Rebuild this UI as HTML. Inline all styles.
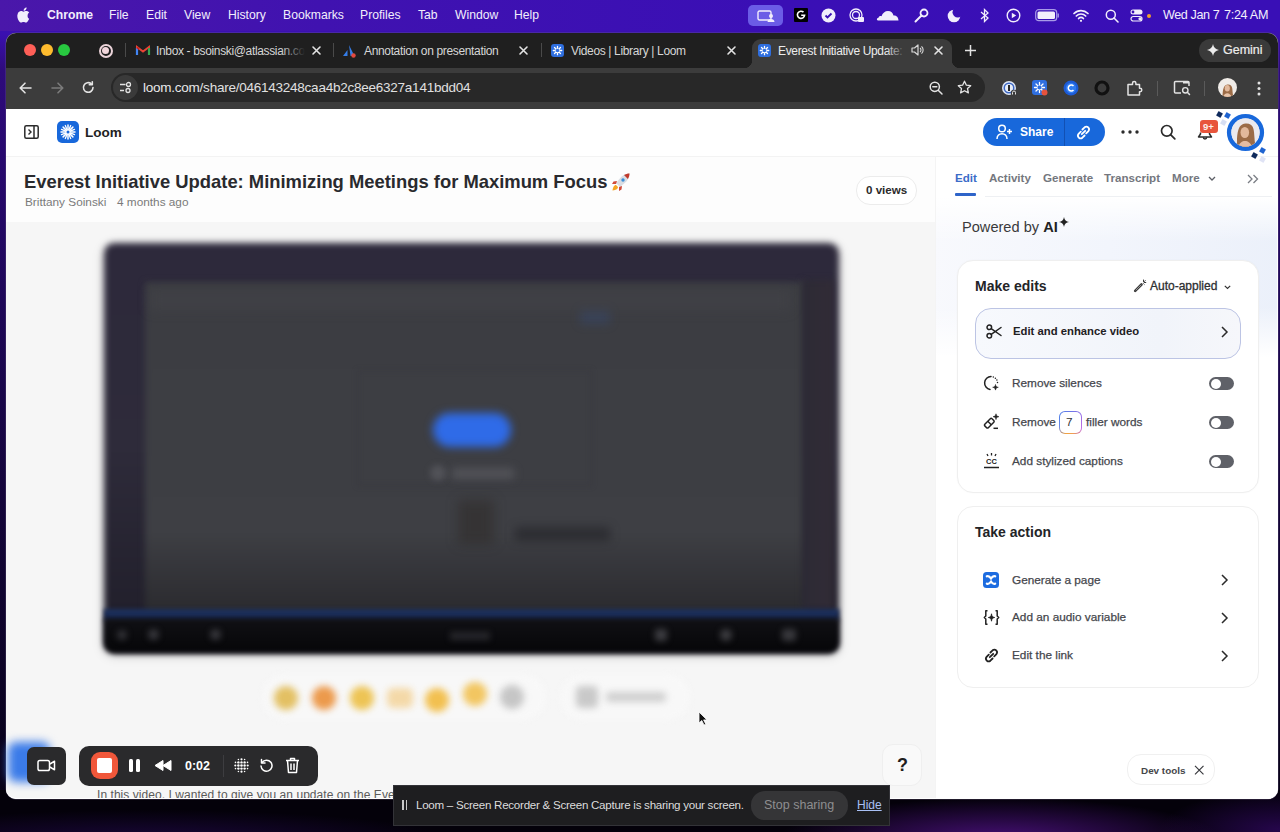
<!DOCTYPE html>
<html><head><meta charset="utf-8">
<style>
*{margin:0;padding:0;box-sizing:border-box}
html,body{width:1280px;height:832px;overflow:hidden}
body{position:relative;font-family:"Liberation Sans",sans-serif;background:#07010f}
.a{position:absolute}
.t{position:absolute;white-space:nowrap;line-height:1}
svg{position:absolute;overflow:visible}
#desk{left:0;top:0;width:1280px;height:832px;background:linear-gradient(180deg,#3b10b3 0px,#3a10b0 34px,#2e0b7c 70px,#280970 150px,#1e0758 300px,#14053a 500px,#08021a 780px,#06010c 832px)}
#deskbot{left:0;top:790px;width:1280px;height:42px;background:radial-gradient(ellipse 220px 40px at 1000px 48px,rgba(90,20,150,.75),transparent),radial-gradient(ellipse 300px 30px at 150px 50px,rgba(40,10,90,.6),transparent),radial-gradient(ellipse 120px 40px at 1280px 40px,rgba(60,10,120,.6),transparent),#04010a}
#menubar{left:0;top:0;width:1280px;height:31px;background:linear-gradient(90deg,#4a17aa,#4012b0 25%,#3a0fb5 60%,#390fb6)}
.mb{color:#f2eefc;font-size:12.2px;top:9px}
#win{left:6px;top:33px;width:1272px;height:766px;border-radius:10px;overflow:hidden;background:#fff;box-shadow:0 0 0 .5px rgba(120,110,140,.5)}
#tabstrip{left:0;top:0;width:1272px;height:36px;background:#1f1f1f}
#toolbar{left:0;top:35px;width:1272px;height:41px;background:#3c3c3c}
#page{left:0;top:76px;width:1272px;height:690px;background:#fff;overflow:hidden}
.tab{color:#d6d6d6;font-size:12px;top:12px;letter-spacing:-0.35px}
.sep{width:1px;height:14px;background:#4a4a4a;top:10px}
.ic{stroke:#e3e3e3;fill:none;stroke-width:1.6;stroke-linecap:round;stroke-linejoin:round}
</style></head><body>
<div id="desk" class="a"></div>
<div id="deskbot" class="a"></div>
<div id="menubar" class="a">
  <svg style="left:17px;top:7px" width="13" height="16" viewBox="0 0 13 16"><path fill="#f2eefc" d="M10.6 8.5c0-1.9 1.6-2.8 1.6-2.9-.9-1.3-2.3-1.5-2.8-1.5-1.2-.1-2.3.7-2.9.7-.6 0-1.5-.7-2.5-.7C2.700 4.200 1.500 5 .9 6.200c-1.300 2.300-.3 5.700.9 7.500.6.900 1.400 1.900 2.300 1.900.9 0 1.300-.6 2.400-.6 1.100 0 1.400.6 2.400.6 1 0 1.600-.9 2.200-1.800.7-1 1-2 1-2.100-.1 0-1.900-.7-1.500-3.200zM8.800 2.800c.5-.6.900-1.500.8-2.300-.8 0-1.700.5-2.200 1.100-.5.600-.9 1.400-.8 2.200.8.100 1.700-.4 2.200-1z"/></svg>
  <div class="t mb" style="left:47px;font-weight:bold">Chrome</div>
  <div class="t mb" style="left:109px">File</div>
  <div class="t mb" style="left:146px">Edit</div>
  <div class="t mb" style="left:184px">View</div>
  <div class="t mb" style="left:228px">History</div>
  <div class="t mb" style="left:283px">Bookmarks</div>
  <div class="t mb" style="left:360px">Profiles</div>
  <div class="t mb" style="left:418px">Tab</div>
  <div class="t mb" style="left:455px">Window</div>
  <div class="t mb" style="left:514px">Help</div>
  <!-- status icons -->
  <div class="a" style="left:748px;top:5px;width:35px;height:21px;border-radius:5px;background:#6b5ce6"></div>
  <svg style="left:757px;top:10px" width="18" height="12" viewBox="0 0 18 12"><rect x="1" y="1" width="13" height="9" rx="1.5" fill="none" stroke="#f2eefc" stroke-width="1.4"/><circle cx="14" cy="6" r="2" fill="#f2eefc"/><path d="M10.5 12c0-2 1.600-3 3.500-3s3.500 1 3.500 3z" fill="#f2eefc"/></svg>
  <div class="a" style="left:794px;top:8px;width:14px;height:14px;background:#000;border-radius:1px"></div>
  <svg style="left:796px;top:10px" width="10" height="10" viewBox="0 0 10 10"><path d="M7.500 2.200A3.600 3.600 0 1 0 8.600 5.200H5.200" fill="none" stroke="#fff" stroke-width="1.6"/></svg>
  <svg style="left:821px;top:8px" width="15" height="15" viewBox="0 0 15 15"><circle cx="7.500" cy="7.500" r="7" fill="#f2eefc"/><path d="M4.500 7.500l2 2 4-4" fill="none" stroke="#3a10b3" stroke-width="1.800"/></svg>
  <svg style="left:849px;top:8px" width="16" height="16" viewBox="0 0 16 16"><circle cx="7" cy="7" r="6" fill="none" stroke="#f2eefc" stroke-width="1.300"/><circle cx="7" cy="7" r="3.500" fill="none" stroke="#f2eefc" stroke-width="1.300"/><rect x="9" y="9" width="6" height="5" rx="1" fill="#f2eefc"/></svg>
  <svg style="left:876px;top:10px" width="23" height="11" viewBox="0 0 23 11"><path d="M2 10.500C.500 10.500 .500 8 2.500 7.800c.300-1.800 2-2.200 3-1.600C6.500 3 9 1 12 1c3 0 5 2 5.500 4.500 2.500-.3 5 1.500 5 5z" fill="#f2eefc"/></svg>
  <svg style="left:914px;top:8px" width="15" height="15" viewBox="0 0 15 15"><circle cx="10" cy="5" r="3.500" fill="none" stroke="#f2eefc" stroke-width="1.800"/><path d="M7.500 7.500L1.500 13.500" stroke="#f2eefc" stroke-width="2" stroke-linecap="round"/></svg>
  <svg style="left:947px;top:8px" width="15" height="15" viewBox="0 0 15 15"><defs><mask id="mm"><rect width="15" height="15" fill="#fff"/><circle cx="10.800" cy="4.300" r="5.300" fill="#000"/></mask></defs><circle cx="7" cy="8" r="6.300" fill="#f2eefc" mask="url(#mm)"/></svg>
  <svg style="left:979px;top:8px" width="11" height="15" viewBox="0 0 11 15"><path d="M2 4l7 6-3.500 3.500V1.500L9 5 2 11" fill="none" stroke="#f2eefc" stroke-width="1.300"/></svg>
  <svg style="left:1006px;top:8px" width="15" height="15" viewBox="0 0 15 15"><circle cx="7.500" cy="7.500" r="6.300" fill="none" stroke="#f2eefc" stroke-width="1.400"/><path d="M5.800 4.800v5.400l4.400-2.700z" fill="#f2eefc"/></svg>
  <svg style="left:1035px;top:9px" width="25" height="13" viewBox="0 0 25 13"><rect x=".700" y=".700" width="21" height="11" rx="3" fill="none" stroke="#a89ae8" stroke-width="1.200"/><rect x="2.500" y="2.500" width="17.500" height="7.500" rx="1.500" fill="#f2eefc"/><path d="M23.200 4.500v4" stroke="#a89ae8" stroke-width="1.400"/></svg>
  <svg style="left:1073px;top:9px" width="16" height="13" viewBox="0 0 16 13"><path d="M1 4.500a10 10 0 0 1 14 0M3.300 7a6.500 6.500 0 0 1 9.400 0M5.600 9.500a3.200 3.200 0 0 1 4.800 0" fill="none" stroke="#f2eefc" stroke-width="1.700" stroke-linecap="round"/><circle cx="8" cy="11.800" r="1.100" fill="#f2eefc"/></svg>
  <svg style="left:1105px;top:9px" width="14" height="14" viewBox="0 0 14 14"><circle cx="5.800" cy="5.800" r="4.500" fill="none" stroke="#f2eefc" stroke-width="1.500"/><path d="M9 9l4 4" stroke="#f2eefc" stroke-width="1.600" stroke-linecap="round"/></svg>
  <svg style="left:1130px;top:9px" width="13" height="13" viewBox="0 0 13 13"><rect x=".500" y=".500" width="12" height="5" rx="2.500" fill="#f2eefc"/><rect x="1" y="7.500" width="11" height="4.500" rx="2.250" fill="none" stroke="#f2eefc" stroke-width="1.200"/><circle cx="3" cy="3" r="1.400" fill="#3a10b3"/><circle cx="10" cy="9.750" r="1.600" fill="#f2eefc"/></svg>
  <div class="a" style="left:1147px;top:14px;width:4px;height:4px;border-radius:50%;background:#f0a030"></div>
  <div class="t mb" style="left:1163px;font-size:12.6px;letter-spacing:-0.4px">Wed Jan 7</div>
  <div class="t mb" style="left:1224px;font-size:12.6px;letter-spacing:-0.3px">7:24 AM</div>
</div>

<div id="win" class="a">
  <div id="tabstrip" class="a">
    <div class="a" style="left:18px;top:11px;width:12px;height:12px;border-radius:50%;background:#fe5f57"></div>
    <div class="a" style="left:35px;top:11px;width:12px;height:12px;border-radius:50%;background:#febb2e"></div>
    <div class="a" style="left:52px;top:11px;width:12px;height:12px;border-radius:50%;background:#28c840"></div>
    <div class="a" style="left:92.500px;top:10.500px;width:14px;height:14px;border-radius:50%;border:2px solid #ecd4da"></div>
    <div class="a" style="left:96px;top:14px;width:7px;height:7px;border-radius:50%;background:#f2d6dc"></div>
    <div class="a sep" style="left:119px"></div>
    <!-- gmail -->
    <svg style="left:130px;top:12px" width="14" height="11" viewBox="0 0 14 11"><path d="M1 10V2l6 4.500L13 2v8" fill="none" stroke="#ea4335" stroke-width="2"/><path d="M1 10V3" stroke="#4285f4" stroke-width="2.200"/><path d="M13 10V3" stroke="#34a853" stroke-width="2.200"/><path d="M1 2.500l2 1.500" stroke="#c5221f" stroke-width="2"/></svg>
    <div class="t tab" style="left:150px">Inbox - bsoinski@atlassian.co</div>
    <div class="a" style="left:275px;top:6px;width:30px;height:22px;background:linear-gradient(90deg,rgba(31,31,31,0),#1f1f1f 80%)"></div>
    <svg style="left:306px;top:13px" width="9" height="9" viewBox="0 0 9 9"><path d="M1 1l7 7M8 1L1 8" class="ic" stroke-width="1.400"/></svg>
    <div class="a sep" style="left:327px"></div>
    <svg style="left:336px;top:11px" width="14" height="14" viewBox="0 0 14 14"><path d="M7 1L12.500 12h-4zM5.500 6L1 12h4.500z" fill="#357de8"/><circle cx="11.500" cy="11.500" r="2.200" fill="#e2483d"/></svg>
    <div class="t tab" style="left:358px">Annotation on presentation</div>
    <svg style="left:513px;top:13px" width="9" height="9" viewBox="0 0 9 9"><path d="M1 1l7 7M8 1L1 8" class="ic" stroke-width="1.400"/></svg>
    <div class="a sep" style="left:535px"></div>
    <div class="a" style="left:545px;top:11px;width:13px;height:13px;border-radius:3px;background:#2f6fe0"></div>
    <svg style="left:545px;top:11px" width="13" height="13" viewBox="0 0 13 13"><g stroke="#fff" stroke-width="1.300" stroke-linecap="round"><path d="M6.500 2.300v8.400M2.300 6.500h8.400M3.500 3.500l6 6M9.500 3.500l-6 6"/></g><circle cx="6.500" cy="6.500" r="1.800" fill="#2f6fe0"/></svg>
    <div class="t tab" style="left:565px">Videos | Library | Loom</div>
    <svg style="left:721px;top:13px" width="9" height="9" viewBox="0 0 9 9"><path d="M1 1l7 7M8 1L1 8" class="ic" stroke-width="1.400"/></svg>
    <!-- active tab -->
    <div class="a" style="left:746px;top:6px;width:200px;height:31px;background:#3c3c3c;border-radius:9px 9px 0 0"></div>
    <div class="a" style="left:738px;top:27px;width:8px;height:9px;background:radial-gradient(circle at 0 0,transparent 8px,#3c3c3c 8.500px)"></div>
    <div class="a" style="left:946px;top:27px;width:8px;height:9px;background:radial-gradient(circle at 100% 0,transparent 8px,#3c3c3c 8.500px)"></div>
    <div class="a" style="left:752px;top:11px;width:13px;height:13px;border-radius:3px;background:#2f6fe0"></div>
    <svg style="left:752px;top:11px" width="13" height="13" viewBox="0 0 13 13"><g stroke="#fff" stroke-width="1.300" stroke-linecap="round"><path d="M6.500 2.300v8.400M2.300 6.500h8.400M3.500 3.500l6 6M9.500 3.500l-6 6"/></g><circle cx="6.500" cy="6.500" r="1.800" fill="#2f6fe0"/></svg>
    <div class="t tab" style="left:772px;color:#ececec">Everest Initiative Update:</div>
    <div class="a" style="left:880px;top:8px;width:22px;height:22px;background:linear-gradient(90deg,rgba(60,60,60,0),#3c3c3c 90%)"></div>
    <svg style="left:905px;top:11px" width="13" height="12" viewBox="0 0 13 12"><path d="M1 4h2.500L7 1v10L3.500 8H1z" fill="none" stroke="#d8d8d8" stroke-width="1.200" stroke-linejoin="round"/><path d="M9 4a2.500 2.500 0 0 1 0 4M10.500 2.300a5 5 0 0 1 0 7.400" fill="none" stroke="#d8d8d8" stroke-width="1.100"/></svg>
    <svg style="left:928px;top:13px" width="9" height="9" viewBox="0 0 9 9"><path d="M1 1l7 7M8 1L1 8" class="ic" stroke-width="1.400"/></svg>
    <svg style="left:959px;top:12px" width="11" height="11" viewBox="0 0 11 11"><path d="M5.500 0v11M0 5.500h11" stroke="#e3e3e3" stroke-width="1.500"/></svg>
    <!-- gemini -->
    <div class="a" style="left:1193px;top:6px;width:72px;height:23px;border-radius:12px;background:#3a3a3a"></div>
    <svg style="left:1201px;top:11px" width="12" height="12" viewBox="0 0 12 12"><path d="M6 0C6.500 3.300 8.700 5.500 12 6 8.700 6.500 6.500 8.700 6 12 5.500 8.700 3.300 6.500 0 6 3.300 5.500 5.500 3.300 6 0z" fill="#ececec"/></svg>
    <div class="t" style="left:1217px;top:11px;font-size:12.5px;color:#ececec;-webkit-text-stroke:.2px #ececec">Gemini</div>
  </div>
  <div id="toolbar" class="a">
    <svg style="left:13px;top:14px" width="13" height="12" viewBox="0 0 13 12"><path d="M12 6H1.500M6 1.200L1.200 6 6 10.800" class="ic" stroke-width="1.600"/></svg>
    <svg style="left:45px;top:14px" width="13" height="12" viewBox="0 0 13 12"><path d="M1 6h10.500M7 1.200L11.800 6 7 10.800" class="ic" style="stroke:#7b7b7b"/></svg>
    <svg style="left:76px;top:13px" width="13" height="13" viewBox="0 0 13 13"><path d="M11 6.500A4.800 4.800 0 1 1 9.300 2.800" class="ic" stroke-width="1.600"/><path d="M10.300 .800v3h-3" class="ic" stroke-width="1.600"/></svg>
    <div class="a" style="left:105px;top:5px;width:874px;height:29px;border-radius:15px;background:#282828"></div>
    <div class="a" style="left:107px;top:7px;width:25px;height:25px;border-radius:50%;background:#3a3a3a"></div>
    <svg style="left:113px;top:13px" width="13" height="13" viewBox="0 0 13 13"><path d="M1 3.500h5.500M1 9.500h4" stroke="#e3e3e3" stroke-width="1.400"/><circle cx="9.500" cy="3.500" r="2" fill="none" stroke="#e3e3e3" stroke-width="1.300"/><circle cx="9" cy="9.500" r="2" fill="none" stroke="#e3e3e3" stroke-width="1.300"/></svg>
    <div class="t" style="left:137px;top:13px;font-size:13.5px;letter-spacing:-0.24px;color:#e8e8e8">loom.com<span style="color:#e0e0e0">/share/046143248caa4b2c8ee6327a141bdd04</span></div>
    <svg style="left:923px;top:13px" width="14" height="14" viewBox="0 0 14 14"><circle cx="5.800" cy="5.800" r="4.600" fill="none" stroke="#e3e3e3" stroke-width="1.500"/><path d="M9.200 9.200l3.800 3.800M3.800 5.800h4" stroke="#e3e3e3" stroke-width="1.500" stroke-linecap="round"/></svg>
    <svg style="left:951px;top:12px" width="15" height="15" viewBox="0 0 15 15"><path d="M7.500 1.200l1.900 4 4.300.5-3.200 2.900.9 4.300-3.900-2.200-3.900 2.200.9-4.300L1.300 5.700l4.300-.5z" fill="none" stroke="#e3e3e3" stroke-width="1.300" stroke-linejoin="round"/></svg>
    <!-- extensions -->
    <svg style="left:995px;top:12px" width="17" height="17" viewBox="0 0 17 17"><circle cx="8" cy="8" r="7" fill="#dfe6f2"/><circle cx="8" cy="8" r="5.500" fill="#3b66c4"/><circle cx="8" cy="8" r="4" fill="#e8eef8"/><rect x="7" y="5" width="2" height="6" fill="#2a2a2a"/><circle cx="13" cy="13" r="3.200" fill="#3c3c3c"/><path d="M11.500 14.500v-2a1.500 1.500 0 0 1 3 0v2" fill="none" stroke="#e3e3e3" stroke-width="1"/></svg>
    <div class="a" style="left:1026px;top:12px;width:15px;height:15px;border-radius:3px;background:#2f6fe0"></div>
    <svg style="left:1026px;top:12px" width="15" height="15" viewBox="0 0 15 15"><g stroke="#fff" stroke-width="1.300" stroke-linecap="round"><path d="M7.500 2.500v10M2.500 7.500h10M4 4l7 7M11 4l-7 7"/></g><circle cx="7.500" cy="7.500" r="2" fill="#2f6fe0"/><circle cx="12.500" cy="12.500" r="3" fill="#e5533d"/></svg>
    <svg style="left:1057px;top:12px" width="16" height="16" viewBox="0 0 16 16"><circle cx="8" cy="8" r="7.500" fill="#1d5bd6"/><circle cx="8" cy="8" r="5.200" fill="#2f7cf0"/><path d="M10.500 6a3 3 0 1 0 0 4" fill="none" stroke="#fff" stroke-width="1.500"/></svg>
    <svg style="left:1088px;top:12px" width="16" height="16" viewBox="0 0 16 16"><circle cx="8" cy="8" r="6" fill="none" stroke="#111" stroke-width="3.200"/></svg>
    <svg style="left:1120px;top:12px" width="17" height="17" viewBox="0 0 17 17"><path d="M2 4.500h4.500V3.300a1.700 1.700 0 0 1 3.400 0v1.200H13.500v3.800h.6a1.700 1.700 0 0 1 0 3.400h-.6v3.300H2z" fill="none" stroke="#e3e3e3" stroke-width="1.500" stroke-linejoin="round"/></svg>
    <div class="a" style="left:1151px;top:13px;width:1px;height:15px;background:#5a5a5a"></div>
    <svg style="left:1167px;top:11px" width="18" height="17" viewBox="0 0 18 17"><path d="M8 14H2.500a1 1 0 0 1-1-1V3.500a1 1 0 0 1 1-1H15a1 1 0 0 1 1 1V7" fill="none" stroke="#e3e3e3" stroke-width="1.500"/><path d="M10 3.500h6" stroke="#e3e3e3" stroke-width="2.200"/><circle cx="12.300" cy="11.300" r="2.700" fill="none" stroke="#e3e3e3" stroke-width="1.400"/><path d="M14.300 13.300l2.200 2.200" stroke="#e3e3e3" stroke-width="1.500" stroke-linecap="round"/></svg>
    <div class="a" style="left:1198px;top:13px;width:1px;height:15px;background:#5a5a5a"></div>
    <svg style="left:1212px;top:10px" width="19" height="19" viewBox="0 0 41 41"><defs><clipPath id="av2"><circle cx="20.500" cy="20.500" r="20.500"/></clipPath></defs><g clip-path="url(#av2)"><rect x="0" y="0" width="41" height="41" fill="#f0ece8"/><path d="M10 41c0-10 0-26 10.500-27S31 22 31.500 30 34 38 34 41z" fill="#9c6c47"/><ellipse cx="20" cy="22" rx="5.500" ry="7" fill="#e2b99c"/><path d="M11 42c1-6 5-9 9-9s8 3 9.500 9z" fill="#e8c4aa"/></g></svg>
    <svg style="left:1251px;top:13px" width="4" height="15" viewBox="0 0 4 15"><circle cx="2" cy="2" r="1.500" fill="#e3e3e3"/><circle cx="2" cy="7.500" r="1.500" fill="#e3e3e3"/><circle cx="2" cy="13" r="1.500" fill="#e3e3e3"/></svg>
  </div>
  <div id="page" class="a"></div>
</div>

<!-- ===== PAGE ===== -->
<div class="a" style="left:6px;top:157px;width:929px;height:65px;background:#fdfdfd"></div>
<div class="a" style="left:6px;top:222px;width:929px;height:576px;background:#f6f6f6;border-bottom-left-radius:10px"></div>
<div class="a" style="left:6px;top:156px;width:1272px;height:1px;background:#f3f3f3"></div>
<div class="a" style="left:935px;top:157px;width:1px;height:641px;background:#f4f4f4"></div>
<!-- header -->
<svg style="left:24px;top:125px" width="15" height="14" viewBox="0 0 15 14"><rect x=".8" y=".8" width="13.4" height="12.4" rx="1.5" fill="none" stroke="#2b2b2b" stroke-width="1.5"/><path d="M10 1v12" stroke="#2b2b2b" stroke-width="1.5"/><path d="M4.5 4.5L7 7 4.5 9.5" fill="none" stroke="#2b2b2b" stroke-width="1.4"/></svg>
<div class="a" style="left:57px;top:121px;width:22px;height:22px;border-radius:5px;background:#1868db"></div>
<svg style="left:57px;top:121px" width="22" height="22" viewBox="0 0 22 22"><g stroke="#fff" stroke-width="1.500" stroke-linecap="round"><path d="M11 4v14M4 11h14M6.100 6.100l9.800 9.800M15.900 6.100l-9.800 9.800"/><path d="M8.300 4.500l5.400 13M4.500 8.300l13 5.400M13.700 4.500l-5.400 13M4.500 13.700l13-5.400" stroke-width="1.300"/></g><circle cx="11" cy="11" r="2.600" fill="#fff"/><circle cx="11" cy="11" r="1.500" fill="#1868db"/></svg>
<div class="t" style="left:85px;top:126px;font-size:13.5px;font-weight:bold;color:#222">Loom</div>
<div class="a" style="left:983px;top:118px;width:122px;height:28px;border-radius:14px;background:#1868db"></div>
<div class="a" style="left:1064px;top:118px;width:1px;height:28px;background:rgba(10,50,130,.45)"></div>
<svg style="left:996px;top:124px" width="17" height="16" viewBox="0 0 17 16"><circle cx="6" cy="4.500" r="3.300" fill="none" stroke="#fff" stroke-width="1.500"/><path d="M1 15c0-3.300 2.200-5.300 5-5.300s5 2 5 5.300" fill="none" stroke="#fff" stroke-width="1.500"/><path d="M13.500 5v5M11 7.500h5" stroke="#fff" stroke-width="1.500"/></svg>
<div class="t" style="left:1020px;top:126px;font-size:12px;font-weight:bold;color:#fff">Share</div>
<svg style="left:1075px;top:124px" width="17" height="17" viewBox="0 0 17 17"><path d="M6.800 10.200l3.400-3.400M5.800 7.700L3.600 9.900a2.700 2.700 0 0 0 3.800 3.800l2.200-2.200M11.200 9.300l2.200-2.200a2.700 2.700 0 0 0-3.800-3.800L7.400 5.500" fill="none" stroke="#fff" stroke-width="1.800" stroke-linecap="round"/></svg>
<svg style="left:1121px;top:130px" width="18" height="4" viewBox="0 0 18 4"><circle cx="2" cy="2" r="1.700" fill="#2b2b2b"/><circle cx="9" cy="2" r="1.700" fill="#2b2b2b"/><circle cx="16" cy="2" r="1.700" fill="#2b2b2b"/></svg>
<svg style="left:1160px;top:124px" width="16" height="16" viewBox="0 0 16 16"><circle cx="6.800" cy="6.800" r="5.300" fill="none" stroke="#2b2b2b" stroke-width="1.700"/><path d="M10.800 10.800l4 4" stroke="#2b2b2b" stroke-width="1.800" stroke-linecap="round"/></svg>
<svg style="left:1197px;top:124px" width="16" height="17" viewBox="0 0 16 17"><path d="M3.500 8.500v1.500L1.500 13h13l-2-3V8.500" fill="none" stroke="#2b2b2b" stroke-width="1.500" stroke-linejoin="round"/><path d="M6.300 13.300a1.700 1.700 0 0 0 3.400 0" fill="none" stroke="#2b2b2b" stroke-width="1.400"/></svg>
<div class="a" style="left:1200px;top:120px;width:18px;height:12.500px;border-radius:3px;background:#e8553c"></div>
<div class="t" style="left:1203px;top:122px;font-size:9.5px;font-weight:bold;color:#fdeee8">9+</div>
<svg style="left:1225px;top:112px" width="41" height="41" viewBox="0 0 41 41"><defs><clipPath id="av"><circle cx="20.500" cy="20.500" r="14.200"/></clipPath></defs><circle cx="20.500" cy="20.500" r="16.300" fill="#fff" stroke="#1868db" stroke-width="4.600"/><g clip-path="url(#av)"><rect x="0" y="0" width="41" height="41" fill="#eceaee"/><path d="M12 32c0-8 0-20 8.500-20.500S29 18 29.500 26 31 33 31 36H12z" fill="#9c6c47"/><ellipse cx="19.800" cy="20.500" rx="4.300" ry="5.600" fill="#e2b99c"/><path d="M13 36c1-5 4-7 7-7s6 2 7.500 7z" fill="#e4bca2"/></g></svg>
<div class="a" style="left:1217px;top:111.500px;width:5px;height:5px;background:#0f2a5c;transform:rotate(30deg);filter:blur(.3px)"></div>
<div class="a" style="left:1224.500px;top:112.500px;width:5px;height:5px;background:#1f63d0;transform:rotate(30deg);filter:blur(.3px)"></div>
<div class="a" style="left:1221px;top:120px;width:5px;height:5px;background:#d6def2;transform:rotate(30deg);filter:blur(.3px)"></div>
<div class="a" style="left:1252px;top:152.500px;width:5px;height:5px;background:#0f2a5c;transform:rotate(30deg);filter:blur(.3px)"></div>
<div class="a" style="left:1260px;top:147.500px;width:5px;height:5px;background:#1f63d0;transform:rotate(30deg);filter:blur(.3px)"></div>
<div class="a" style="left:1259.500px;top:157px;width:5px;height:5px;background:#dfe3f5;transform:rotate(30deg);filter:blur(.3px)"></div>
<!-- title -->
<div class="t" style="left:24px;top:173px;font-size:18.4px;font-weight:bold;color:#292a2e">Everest Initiative Update: Minimizing Meetings for Maximum Focus</div>
<svg style="left:611px;top:172px" width="20" height="20" viewBox="0 0 20 20"><path d="M18.500 1.500c-4 0-8 2-10.500 6L5 11l4 4 3.500-3c4-2.500 6-6.500 6-10.500z" fill="#d9dde3"/><path d="M18.500 1.500c-2 0-4 .700-5.500 1.600l3.900 3.900c.9-1.500 1.600-3.500 1.600-5.500z" fill="#c0392b"/><circle cx="12" cy="8" r="1.700" fill="#3a8fd8"/><path d="M6 9L2.500 9.500 1 12h4zM11 14l-.5 3.500L8 19v-4z" fill="#d04a3a"/><path d="M5 13c-1.500 0-3 1.500-3.500 5.500C5.500 18 7 16.500 7 15z" fill="#f5a623"/></svg>
<div class="t" style="left:25px;top:197px;font-size:11.8px;color:#7a7a7a">Brittany Soinski</div>

<div class="t" style="left:117px;top:197px;font-size:11.8px;color:#7a7a7a">4 months ago</div>
<div class="a" style="left:856px;top:176px;width:61px;height:29px;border-radius:14px;border:1px solid #ececec;background:#fff"></div>
<div class="t" style="left:866px;top:184px;font-size:11.6px;font-weight:bold;color:#2b2b2b">0 views</div>

<!-- ===== RIGHT PANEL ===== -->
<div class="a" style="left:936px;top:197px;width:341px;height:160px;background:linear-gradient(180deg,rgba(255,255,255,1) 0,rgba(255,255,255,0) 45px,rgba(255,255,255,0) 110px,rgba(255,255,255,1) 160px),linear-gradient(95deg,#f8f9fd 0%,#f2f5fc 50%,#ebf0fa 100%)"></div>
<div class="t" style="left:955px;top:172px;font-size:11.6px;font-weight:bold;color:#3b6cc8">Edit</div>
<div class="a" style="left:955px;top:193px;width:21px;height:2.5px;border-radius:1px;background:#2e64c9"></div>
<div class="a" style="left:985px;top:196px;width:287px;height:1px;background:#eef0f3"></div>
<div class="t" style="left:989px;top:172px;font-size:11.6px;font-weight:bold;color:#74777e">Activity</div>
<div class="t" style="left:1043px;top:172px;font-size:11.6px;font-weight:bold;color:#74777e">Generate</div>
<div class="t" style="left:1104px;top:172px;font-size:11.6px;font-weight:bold;color:#74777e">Transcript</div>
<div class="t" style="left:1172px;top:172px;font-size:11.6px;font-weight:bold;color:#74777e">More</div>
<svg style="left:1208px;top:176px" width="8" height="5" viewBox="0 0 8 5"><path d="M1 1l3 3 3-3" fill="none" stroke="#5c5f66" stroke-width="1.300"/></svg>
<svg style="left:1247px;top:174px" width="12" height="10" viewBox="0 0 12 10"><path d="M1 1l4 4-4 4M6.500 1l4 4-4 4" fill="none" stroke="#7a7d84" stroke-width="1.300"/></svg>
<div class="t" style="left:962px;top:220px;font-size:14.6px;color:#3a3a3c">Powered by <b style="color:#222">AI</b></div>
<svg style="left:1059px;top:217px" width="10" height="10" viewBox="0 0 10 10"><path d="M5 0C5.400 2.800 7.200 4.600 10 5 7.200 5.400 5.400 7.200 5 10 4.600 7.200 2.800 5.400 0 5 2.800 4.600 4.600 2.800 5 0z" fill="#222"/></svg>

<!-- Make edits card -->
<div class="a" style="left:957px;top:260px;width:302px;height:233px;border-radius:16px;border:1px solid #efefef;background:#fff;box-shadow:0 0 2px rgba(0,0,0,.03)"></div>
<div class="t" style="left:975px;top:279px;font-size:14px;font-weight:bold;color:#232427">Make edits</div>
<svg style="left:1133px;top:279px" width="14" height="14" viewBox="0 0 14 14"><path d="M2.200 11.800l6.300-6.300" stroke="#3a3a3a" stroke-width="2.600" stroke-linecap="round"/><path d="M3 11l5-5" stroke="#bbb" stroke-width=".7" stroke-linecap="round"/><path d="M10.500 1v1.600M12.800 3.500h-1.600M12.200 1.600l-1 1M10.600 4.700l.6.6" stroke="#3a3a3a" stroke-width="1" stroke-linecap="round"/></svg>
<div class="t" style="left:1150px;top:280px;font-size:12px;color:#2d2e31;-webkit-text-stroke:.3px #2d2e31">Auto-applied</div>
<svg style="left:1224px;top:285px" width="7" height="5" viewBox="0 0 7 5"><path d="M.800 .800l2.700 2.700 2.700-2.700" fill="none" stroke="#333" stroke-width="1.200"/></svg>
<div class="a" style="left:975px;top:308px;width:266px;height:51px;border-radius:16px;border:1px solid #bcc4e4;background:linear-gradient(90deg,#f7f9fd,#f1f4fa 70%,#f6f7fb)"></div>
<svg style="left:986px;top:324px" width="16" height="15" viewBox="0 0 16 15"><circle cx="3.300" cy="3.300" r="2.300" fill="none" stroke="#222" stroke-width="1.500"/><circle cx="3.300" cy="11.700" r="2.300" fill="none" stroke="#222" stroke-width="1.500"/><path d="M5.200 4.700L15 11.500M5.200 10.300L15 3.500" stroke="#222" stroke-width="1.500" stroke-linecap="round"/></svg>
<div class="t" style="left:1013px;top:326px;font-size:11.3px;font-weight:bold;color:#1f2023">Edit and enhance video</div>
<svg style="left:1221px;top:326px" width="7" height="12" viewBox="0 0 7 12"><path d="M1 1l5 5-5 5" fill="none" stroke="#2b2b2b" stroke-width="1.500"/></svg>

<svg style="left:983px;top:375px" width="17" height="17" viewBox="0 0 17 17"><path d="M8 1.500A6.500 6.500 0 0 0 7 14.400" fill="none" stroke="#222" stroke-width="1.500" stroke-linecap="round"/><g fill="#222"><circle cx="10.300" cy="2" r=".75"/><circle cx="12.400" cy="3.200" r=".75"/><circle cx="13.900" cy="5.100" r=".75"/><circle cx="14.500" cy="7.500" r=".75"/></g><path d="M12.500 9.500C12.800 11.300 13.500 12 15.300 12.300 13.500 12.600 12.800 13.300 12.500 15.100 12.200 13.300 11.500 12.600 9.700 12.300 11.500 12 12.200 11.300 12.500 9.500z" fill="#222" stroke="#222" stroke-width=".6" stroke-linejoin="round"/></svg>
<div class="t" style="left:1012px;top:378px;font-size:11.8px;color:#45474d;-webkit-text-stroke:.25px #45474d">Remove silences</div>
<div class="a" style="left:1209px;top:377px;width:25px;height:13px;border-radius:7px;background:#5f6168"></div>
<div class="a" style="left:1210.5px;top:378.5px;width:10px;height:10px;border-radius:50%;background:#fff"></div>

<svg style="left:983px;top:413px" width="17" height="17" viewBox="0 0 17 17"><path d="M1.800 11.200l5.500-5.500a1.200 1.200 0 0 1 1.700 0l1.800 1.800a1.200 1.200 0 0 1 0 1.700l-5.500 5.500a1.200 1.200 0 0 1-1.700 0L1.800 12.900a1.200 1.200 0 0 1 0-1.700z" fill="none" stroke="#222" stroke-width="1.500"/><path d="M4.800 8.300l3.400 3.400" stroke="#222" stroke-width="1.400"/><path d="M10.500 15.300h4.500" stroke="#222" stroke-width="1.500"/><path d="M13 .800C13.300 2.700 14 3.400 15.900 3.700 14 4 13.300 4.700 13 6.600 12.700 4.700 12 4 10.100 3.700 12 3.400 12.700 2.700 13 .800z" fill="#222" stroke="#222" stroke-width=".6" stroke-linejoin="round"/></svg>
<div class="t" style="left:1012px;top:417px;font-size:11.8px;color:#45474d;-webkit-text-stroke:.25px #45474d">Remove</div>
<div class="a" style="left:1059px;top:411px;width:23px;height:23px;border-radius:6px;background:conic-gradient(from 0deg,#6a78e8 0deg,#a26de6 70deg,#c570de 120deg,#f0a050 170deg,#f4a340 200deg,#6a8ae8 250deg,#4f7fe8 300deg,#6a78e8 360deg)"></div>
<div class="a" style="left:1060.300px;top:412.300px;width:20.400px;height:20.400px;border-radius:5px;background:#fff"></div>
<div class="t" style="left:1066px;top:417px;font-size:11.8px;color:#333">7</div>
<div class="t" style="left:1086px;top:417px;font-size:11.8px;color:#45474d;-webkit-text-stroke:.25px #45474d">filler words</div>
<div class="a" style="left:1209px;top:416px;width:25px;height:13px;border-radius:7px;background:#5f6168"></div>
<div class="a" style="left:1210.5px;top:417.5px;width:10px;height:10px;border-radius:50%;background:#fff"></div>

<svg style="left:983px;top:452px" width="17" height="17" viewBox="0 0 17 17"><path d="M4 2l1 2M8.500 1v2.500M13 2l-1 2" stroke="#222" stroke-width="1.300"/><text x="8.500" y="12" text-anchor="middle" font-family="Liberation Sans" font-weight="bold" font-size="7.500" fill="#222">CC</text><path d="M1 15.500h15" stroke="#222" stroke-width="1.500"/></svg>
<div class="t" style="left:1012px;top:456px;font-size:11.8px;color:#45474d;-webkit-text-stroke:.25px #45474d">Add stylized captions</div>
<div class="a" style="left:1209px;top:455px;width:25px;height:13px;border-radius:7px;background:#5f6168"></div>
<div class="a" style="left:1210.5px;top:456.5px;width:10px;height:10px;border-radius:50%;background:#fff"></div>

<!-- Take action card -->
<div class="a" style="left:957px;top:506px;width:302px;height:182px;border-radius:16px;border:1px solid #efefef;background:#fff"></div>
<div class="t" style="left:975px;top:525px;font-size:14px;font-weight:bold;color:#232427">Take action</div>
<div class="a" style="left:983px;top:572px;width:16px;height:16px;border-radius:3.500px;background:#1d6ce0"></div>
<svg style="left:983px;top:572px" width="16" height="16" viewBox="0 0 16 16"><path d="M3.800 4.300c1.600-.6 3 .3 4.200 2.200 1.200-1.900 2.600-2.800 4.200-2.200M3.800 11.700c1.600.6 3-.3 4.200-2.200 1.200 1.900 2.600 2.800 4.200 2.200" fill="none" stroke="#fff" stroke-width="2.200" stroke-linecap="round"/></svg>
<div class="t" style="left:1012px;top:575px;font-size:11.8px;color:#45474d;-webkit-text-stroke:.25px #45474d">Generate a page</div>
<svg style="left:1221px;top:574px" width="7" height="12" viewBox="0 0 7 12"><path d="M1 1l5 5-5 5" fill="none" stroke="#2b2b2b" stroke-width="1.500"/></svg>
<svg style="left:983px;top:609px" width="17" height="17" viewBox="0 0 17 17"><path d="M4.500 1.800H2.800v5.200L1.300 8.500l1.500 1.500v5.200h1.700M12.500 1.800h1.700v5.200l1.500 1.500-1.500 1.500v5.200h-1.700" fill="none" stroke="#222" stroke-width="1.500" stroke-linejoin="round"/><path d="M8.500 4.800C8.800 7.200 9.300 7.900 11.700 8.500 9.300 9.100 8.800 9.800 8.500 12.200 8.200 9.800 7.700 9.100 5.300 8.500 7.700 7.900 8.200 7.200 8.500 4.800z" fill="#222" stroke="#222" stroke-width=".8" stroke-linejoin="round"/></svg>
<div class="t" style="left:1012px;top:612px;font-size:11.8px;color:#45474d;-webkit-text-stroke:.25px #45474d">Add an audio variable</div>
<svg style="left:1221px;top:612px" width="7" height="12" viewBox="0 0 7 12"><path d="M1 1l5 5-5 5" fill="none" stroke="#2b2b2b" stroke-width="1.500"/></svg>
<svg style="left:983px;top:647px" width="17" height="17" viewBox="0 0 17 17"><path d="M6.800 10.200l3.400-3.400M5.800 7.700L3.600 9.900a2.700 2.700 0 0 0 3.800 3.800l2.200-2.200M11.200 9.300l2.200-2.200a2.700 2.700 0 0 0-3.800-3.800L7.400 5.500" fill="none" stroke="#222" stroke-width="1.800" stroke-linecap="round"/></svg>
<div class="t" style="left:1012px;top:650px;font-size:11.8px;color:#45474d;-webkit-text-stroke:.25px #45474d">Edit the link</div>
<svg style="left:1221px;top:650px" width="7" height="12" viewBox="0 0 7 12"><path d="M1 1l5 5-5 5" fill="none" stroke="#2b2b2b" stroke-width="1.500"/></svg>

<!-- dev tools -->
<div class="a" style="left:1127px;top:754px;width:88px;height:31px;border-radius:14px;border:1px solid #f0f0f0;background:#fff"></div>
<div class="t" style="left:1141px;top:765.500px;font-size:9.900px;font-weight:bold;color:#45464a">Dev tools</div>
<svg style="left:1194px;top:765px" width="11" height="10" viewBox="0 0 11 10"><path d="M1 .800l8.500 8.500M9.500 .800L1 9.300" stroke="#3a3b3f" stroke-width="1.200"/></svg>

<!-- ===== VIDEO ===== -->
<div class="a" style="left:104px;top:243px;width:735px;height:410px;border-radius:10px;background:linear-gradient(180deg,#2d293b,#2e2b3a 50%,#22202c 90%);filter:blur(3.2px);box-shadow:0 2px 8px rgba(0,0,0,.25)"></div>
<div class="a" style="left:145px;top:282px;width:661px;height:333px;background:linear-gradient(180deg,#3c3d42 0,#3e3f44 250px,#2a2a2e 333px);filter:blur(3px)"></div><div class="a" style="left:802px;top:280px;width:31px;height:330px;background:linear-gradient(90deg,#2c2a35,#322c36);filter:blur(3px)"></div>
<div class="a" style="left:104px;top:609px;width:735px;height:12px;background:linear-gradient(180deg,#1d3260,#1a2b55 60%,#121a30);filter:blur(2.200px)"></div>
<div class="a" style="left:104px;top:619px;width:735px;height:34px;border-radius:0 0 10px 10px;background:linear-gradient(180deg,#101014,#060608);filter:blur(2.5px)"></div>
<div class="a" style="left:433px;top:413px;width:78px;height:34px;border-radius:17px;background:#2f6be8;filter:blur(4px)"></div>
<div class="a" style="left:430px;top:465px;width:16px;height:16px;border-radius:50%;background:rgba(120,120,125,.35);filter:blur(3px)"></div><div class="a" style="left:452px;top:468px;width:62px;height:11px;background:rgba(120,120,125,.35);filter:blur(4px)"></div>
<div class="a" style="left:458px;top:500px;width:36px;height:44px;background:rgba(40,34,30,.4);filter:blur(6px)"></div><div class="a" style="left:515px;top:527px;width:95px;height:14px;background:rgba(25,25,28,.45);filter:blur(5px)"></div>
<div class="a" style="left:580px;top:310px;width:30px;height:14px;background:rgba(50,80,140,.3);filter:blur(5px)"></div>
<div class="a" style="left:150px;top:290px;width:640px;height:20px;background:rgba(70,70,76,.4);filter:blur(6px)"></div>
<div class="a" style="left:357px;top:370px;width:235px;height:116px;border:1px solid rgba(52,52,58,.6);filter:blur(2.5px)"></div>
<div class="a" style="left:117px;top:630px;width:10px;height:10px;border-radius:50%;background:rgba(90,90,96,.5);filter:blur(3px)"></div>
<div class="a" style="left:148px;top:629px;width:11px;height:11px;border-radius:50%;background:rgba(90,90,96,.55);filter:blur(3px)"></div>
<div class="a" style="left:210px;top:629px;width:11px;height:11px;border-radius:50%;background:rgba(90,90,96,.55);filter:blur(3px)"></div>
<div class="a" style="left:450px;top:632px;width:40px;height:8px;background:rgba(90,90,96,.35);filter:blur(3px)"></div>
<div class="a" style="left:655px;top:629px;width:12px;height:12px;border-radius:3px;background:rgba(100,100,106,.55);filter:blur(3px)"></div>
<div class="a" style="left:720px;top:629px;width:12px;height:12px;border-radius:50%;background:rgba(100,100,106,.55);filter:blur(3px)"></div>
<div class="a" style="left:782px;top:629px;width:14px;height:12px;border-radius:3px;background:rgba(100,100,106,.5);filter:blur(3px)"></div>



<!-- reactions -->
<div class="a" style="left:262px;top:674px;width:284px;height:46px;border-radius:23px;background:#f8f8f8;filter:blur(3px)"></div>
<div class="a" style="left:560px;top:674px;width:130px;height:46px;border-radius:23px;background:#f8f8f8;filter:blur(3px)"></div>
<div class="a" style="left:274px;top:686px;width:24px;height:24px;border-radius:50%;background:#e3c063;filter:blur(3.5px)"></div>
<div class="a" style="left:312px;top:686px;width:24px;height:24px;border-radius:50%;background:#ec9a4c;filter:blur(3.5px)"></div>
<div class="a" style="left:350px;top:686px;width:24px;height:24px;border-radius:50%;background:#edc455;filter:blur(3.5px)"></div>
<div class="a" style="left:387px;top:688px;width:26px;height:20px;border-radius:6px;background:#f4d9a8;filter:blur(3.5px)"></div>
<div class="a" style="left:425px;top:688px;width:24px;height:24px;border-radius:50%;background:#f2c050;filter:blur(3.5px)"></div>
<div class="a" style="left:463px;top:682px;width:24px;height:24px;border-radius:50%;background:#f2c661;filter:blur(3.5px)"></div>
<div class="a" style="left:500px;top:685px;width:24px;height:24px;border-radius:50%;background:#c6c6c6;filter:blur(3.5px)"></div>
<div class="a" style="left:576px;top:686px;width:22px;height:22px;border-radius:5px;background:#c9c9c9;filter:blur(3.5px)"></div>
<div class="a" style="left:606px;top:692px;width:60px;height:10px;border-radius:4px;background:#cfcfcf;filter:blur(3.5px)"></div>

<!-- cursor -->
<svg style="left:698px;top:711px" width="10" height="15" viewBox="0 0 10 15"><path d="M1 1v11l2.800-2.500L6 14l1.800-.8-2.200-4.300H9z" fill="#111" stroke="#fff" stroke-width=".8"/></svg>

<!-- recorder -->
<div class="a" style="left:8px;top:742px;width:42px;height:40px;border-radius:8px;background:#3b7be8;filter:blur(5px)"></div>
<div class="a" style="left:27px;top:747px;width:39px;height:38px;border-radius:7px;background:#2a2a2c"></div>
<svg style="left:37px;top:759px" width="19" height="13" viewBox="0 0 19 13"><rect x="1" y="1.500" width="11.500" height="10" rx="1.800" fill="none" stroke="#fff" stroke-width="1.500"/><path d="M13 5l4.500-2.800v8.600L13 8" fill="none" stroke="#fff" stroke-width="1.500" stroke-linejoin="round"/></svg>
<div class="a" style="left:79px;top:746px;width:239px;height:40px;border-radius:10px;background:#2a2a2c"></div>
<div class="a" style="left:91px;top:752px;width:27px;height:27px;border-radius:9px;background:#f0573a"></div>
<div class="a" style="left:97px;top:758px;width:15px;height:15px;border-radius:2px;background:#fff"></div>
<div class="a" style="left:129px;top:759px;width:4px;height:13px;border-radius:1.500px;background:#fff"></div>
<div class="a" style="left:136px;top:759px;width:4px;height:13px;border-radius:1.500px;background:#fff"></div>
<svg style="left:154px;top:760px" width="18" height="11" viewBox="0 0 18 11"><path d="M9 .500v10L1 5.500zM17 .500v10L9 5.500z" fill="#fff" stroke="#fff" stroke-width="1" stroke-linejoin="round"/></svg>
<div class="t" style="left:185px;top:760px;font-size:12.5px;font-weight:bold;color:#fff">0:02</div>
<div class="a" style="left:223px;top:755px;width:1px;height:22px;background:#3d3d40"></div>
<svg style="left:234px;top:758px" width="15" height="15" viewBox="0 0 15 15"><g fill="#fff"><circle cx="7.5" cy="1.3" r="1.1"/><circle cx="4.4" cy="4.4" r="1.2"/><circle cx="7.5" cy="4.4" r="1.2"/><circle cx="10.6" cy="4.4" r="1.2"/><circle cx="1.3" cy="7.5" r="1.1"/><circle cx="4.4" cy="7.5" r="1.2"/><circle cx="7.5" cy="7.5" r="1.3"/><circle cx="10.6" cy="7.5" r="1.2"/><circle cx="13.7" cy="7.5" r="1.1"/><circle cx="4.4" cy="10.6" r="1.2"/><circle cx="7.5" cy="10.6" r="1.2"/><circle cx="10.6" cy="10.6" r="1.2"/><circle cx="7.5" cy="13.7" r="1.1"/><circle cx="1.5" cy="4.4" r="0.8"/><circle cx="13.5" cy="4.4" r="0.8"/><circle cx="1.5" cy="10.6" r="0.8"/><circle cx="13.5" cy="10.6" r="0.8"/><circle cx="4.4" cy="1.5" r="0.8"/><circle cx="10.6" cy="1.5" r="0.8"/><circle cx="4.4" cy="13.5" r="0.8"/><circle cx="10.6" cy="13.5" r="0.8"/></g></svg>
<svg style="left:259px;top:758px" width="15" height="15" viewBox="0 0 15 15"><path d="M3 4.500A5.500 5.500 0 1 1 2 8" fill="none" stroke="#fff" stroke-width="1.500" stroke-linecap="round"/><path d="M2.500 1.500v3.500H6" fill="none" stroke="#fff" stroke-width="1.500" stroke-linecap="round" stroke-linejoin="round"/></svg>
<svg style="left:285px;top:757px" width="15" height="17" viewBox="0 0 15 17"><path d="M1 3.500h13M5.500 3.500V1.500h4v2M2.500 3.500l1 12h8l1-12M6 6.500v6.500M9 6.500v6.500" fill="none" stroke="#fff" stroke-width="1.500" stroke-linejoin="round"/></svg>

<div class="a" style="left:90px;top:786px;width:310px;height:12px;overflow:hidden"><div class="t" style="left:7px;top:3px;font-size:12px;color:#5a5a5a;letter-spacing:.05px">In this video, I wanted to give you an update on the Everest</div></div>

<!-- help -->
<div class="a" style="left:882px;top:744px;width:40px;height:42px;border-radius:11px;background:#f9f9f9;border:1px solid #efefef"></div>
<div class="t" style="left:897px;top:755.500px;font-size:18px;font-weight:bold;color:#1e1e1e">?</div>

<!-- share notification -->
<div class="a" style="left:393px;top:785px;width:497px;height:41px;background:#1e1e20;border:1px solid #333338"></div>
<div class="a" style="left:402px;top:800px;width:1.600px;height:10px;background:#c8c8c8"></div>
<div class="a" style="left:405.600px;top:800px;width:1.600px;height:10px;background:#c8c8c8"></div>
<div class="t" style="left:416px;top:799px;font-size:11.6px;letter-spacing:-0.27px;color:#dcdcdc">Loom – Screen Recorder &amp; Screen Capture is sharing your screen.</div>
<div class="a" style="left:751px;top:791px;width:97px;height:29px;border-radius:14px;background:#353537"></div>
<div class="t" style="left:764px;top:799px;font-size:12.5px;color:#8e8e90">Stop sharing</div>
<div class="t" style="left:857px;top:799px;font-size:12px;color:#a9c0f5;text-decoration:underline">Hide</div>
</body></html>
